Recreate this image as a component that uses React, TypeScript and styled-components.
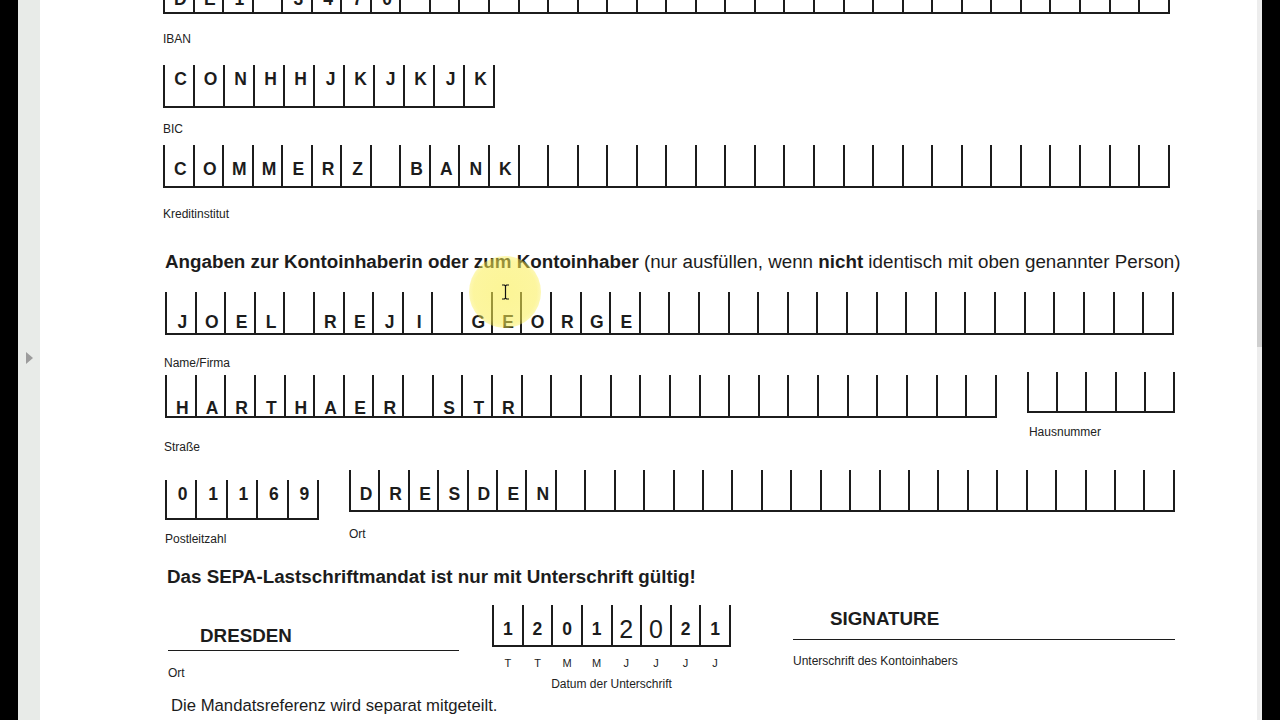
import React from "react";
import styled, { createGlobalStyle } from "styled-components";

const GlobalStyle = createGlobalStyle`
  html, body {
    margin: 0;
    padding: 0;
    background: #000;
  }
  body {
    font-family: "Liberation Sans", Arial, sans-serif;
  }
`;

const INK = "#1c1c1c";

const Screen = styled.div`
  display: flex;
  width: 1280px;
  height: 720px;
  overflow: hidden;
  background: #000;
`;

const BlackEdge = styled.div<{ $w: number }>`
  flex: 0 0 ${(p) => p.$w}px;
  background: #000;
`;

const Gutter = styled.div`
  flex: 0 0 22px;
  background: #e8ebe8;
  display: flex;
  align-items: center;
  justify-content: center;
`;

const Triangle = styled.div`
  width: 0;
  height: 0;
  margin-top: -4px;
  border-top: 6px solid transparent;
  border-bottom: 6px solid transparent;
  border-left: 7px solid #9c9c9c;
`;

const ScrollTrack = styled.div`
  flex: 0 0 5px;
  background: #ededed;
  padding-top: 210px;
  box-sizing: border-box;
`;

const ScrollThumb = styled.div`
  height: 137px;
  background: #cfcfcf;
`;

const Page = styled.div`
  position: relative;
  flex: 1;
  background: #fff;
  overflow: hidden;
  color: ${INK};
`;

const Form = styled.div`
  display: flex;
  flex-direction: column;
  align-items: flex-start;
  padding-left: 123px;
`;

const Field = styled.div<{ $mt?: number; $ml?: number; $center?: boolean }>`
  display: flex;
  flex-direction: column;
  align-items: ${(p) => (p.$center ? "center" : "flex-start")};
  margin-top: ${(p) => p.$mt ?? 0}px;
  margin-left: ${(p) => p.$ml ?? 0}px;
`;

const FieldRow = styled.div<{ $mt: number }>`
  display: flex;
  align-items: flex-start;
  margin-top: ${(p) => p.$mt}px;
`;

const BoxRow = styled.div<{ $h: number; $mt?: number; $ml?: number }>`
  display: flex;
  box-sizing: border-box;
  height: ${(p) => p.$h}px;
  margin-top: ${(p) => p.$mt ?? 0}px;
  margin-left: ${(p) => p.$ml ?? 0}px;
  border-right: 2px solid ${INK};
  border-bottom: 2px solid ${INK};
`;

const Cell = styled.div<{ $w: number; $pad: number; $mid?: boolean }>`
  display: flex;
  justify-content: center;
  align-items: ${(p) => (p.$mid ? "center" : "flex-start")};
  box-sizing: border-box;
  width: ${(p) => p.$w}px;
  padding-top: ${(p) => p.$pad}px;
  padding-left: ${(p) => (p.$mid ? 0 : 3)}px;
  border-left: 2px solid ${INK};
`;

const Char = styled.span<{ $big?: boolean }>`
  font-family: "Liberation Sans", Arial, sans-serif;
  font-size: ${(p) => (p.$big ? 25 : 17.5)}px;
  line-height: ${(p) => (p.$big ? 25 : 17)}px;
  font-weight: ${(p) => (p.$big ? 400 : 700)};
`;

const Label = styled.div<{ $mt: number; $ml?: number }>`
  margin-top: ${(p) => p.$mt}px;
  margin-left: ${(p) => p.$ml ?? 0}px;
  font-size: 12px;
  line-height: 14px;
  color: #222;
  white-space: nowrap;
`;

const Heading = styled.div<{ $mt: number; $ml: number }>`
  margin-top: ${(p) => p.$mt}px;
  margin-left: ${(p) => p.$ml}px;
  font-size: 18.8px;
  line-height: 22px;
  font-weight: 700;
  white-space: nowrap;
`;

const Plain = styled.span`
  font-weight: 400;
`;

const Strong = styled.span`
  font-weight: 700;
`;

const Written = styled.div<{ $mt: number; $ml: number }>`
  margin-top: ${(p) => p.$mt}px;
  margin-left: ${(p) => p.$ml}px;
  font-size: 18.8px;
  line-height: 22px;
  font-weight: 700;
`;

const SignLine = styled.div<{ $w: number; $mt: number }>`
  width: ${(p) => p.$w}px;
  margin-top: ${(p) => p.$mt}px;
  border-top: 1.5px solid ${INK};
`;

const DateLetters = styled.div`
  display: flex;
  margin-top: 10px;
`;

const DateLetter = styled.span`
  width: 29.6px;
  text-align: center;
  font-size: 11px;
  line-height: 12px;
  color: #222;
`;

const Note = styled.div`
  margin-top: 5px;
  margin-left: 8px;
  font-size: 16.7px;
  line-height: 20px;
`;

const Highlight = styled.div`
  position: absolute;
  left: 429px;
  top: 256px;
  width: 72px;
  height: 72px;
  border-radius: 50%;
  background: radial-gradient(
    circle,
    rgba(250, 238, 80, 0.6) 0%,
    rgba(250, 238, 80, 0.55) 62%,
    rgba(250, 238, 80, 0) 100%
  );
  pointer-events: none;
`;

const Cursor = styled.svg`
  position: absolute;
  left: 461px;
  top: 284px;
`;

type BoxesProps = {
  count: number;
  width: number;
  height: number;
  text?: string;
  pad?: number;
  mt?: number;
  ml?: number;
  mid?: boolean;
  big?: number[];
};

const CharBoxes = ({ count, width, height, text = "", pad = 0, mt, ml, mid, big = [] }: BoxesProps) => {
  const w = width / count;
  return (
    <BoxRow $h={height} $mt={mt} $ml={ml}>
      {Array.from({ length: count }, (_, i) => (
        <Cell key={i} $w={w} $pad={pad} $mid={mid}>
          <Char $big={big.includes(i)}>{(text[i] ?? "").trim()}</Char>
        </Cell>
      ))}
    </BoxRow>
  );
};

export default function App() {
  return (
    <>
      <GlobalStyle />
      <Screen>
        <BlackEdge $w={18} />
        <Gutter>
          <Triangle />
        </Gutter>
        <Page>
          <Form>
            <Field $mt={-28}>
              <CharBoxes count={34} width={1005} height={42} text="DE1 3470" pad={19} />
              <Label $mt={18}>IBAN</Label>
            </Field>

            <Field $mt={19}>
              <CharBoxes count={11} width={330} height={43} text="CONHHJKJKJK" pad={6} />
              <Label $mt={14}>BIC</Label>
            </Field>

            <Field $mt={9}>
              <CharBoxes count={34} width={1005} height={43} text="COMMERZ BANK" pad={16} />
              <Label $mt={19}>Kreditinstitut</Label>
            </Field>

            <Heading $mt={30} $ml={2}>
              Angaben zur Kontoinhaberin oder zum Kontoinhaber{" "}
              <Plain>
                (nur ausfüllen, wenn <Strong>nicht</Strong> identisch mit oben genannter Person)
              </Plain>
            </Heading>

            <Field $mt={19} $ml={2}>
              <CharBoxes count={34} width={1007} height={43} text="JOEL REJI GEORGE" pad={22} />
              <Label $mt={21} $ml={-1}>Name/Firma</Label>
            </Field>

            <FieldRow $mt={2}>
              <Field $mt={3} $ml={2}>
                <CharBoxes count={28} width={830} height={43} text="HARTHAER STR" pad={25} />
                <Label $mt={22} $ml={-1}>Straße</Label>
              </Field>
              <Field $ml={30}>
                <CharBoxes count={5} width={146} height={41} />
                <Label $mt={12} $ml={2}>Hausnummer</Label>
              </Field>
            </FieldRow>

            <FieldRow $mt={16}>
              <Field $mt={10} $ml={2}>
                <CharBoxes count={5} width={152} height={40} text="01169" pad={6} />
                <Label $mt={12}>Postleitzahl</Label>
              </Field>
              <Field $ml={30}>
                <CharBoxes count={28} width={824} height={42} text="DRESDEN" pad={16} />
                <Label $mt={15}>Ort</Label>
              </Field>
            </FieldRow>

            <Heading $mt={20} $ml={4}>
              Das SEPA-Lastschriftmandat ist nur mit Unterschrift gültig!
            </Heading>

            <FieldRow $mt={0}>
              <Field $ml={5}>
                <Written $mt={37} $ml={32}>DRESDEN</Written>
                <SignLine $w={291} $mt={3} />
                <Label $mt={15}>Ort</Label>
              </Field>
              <Field $ml={33} $mt={17} $center>
                <CharBoxes count={8} width={237} height={42} text="12012021" pad={8} mid big={[4, 5]} />
                <DateLetters>
                  {"TTMMJJJJ".split("").map((c, i) => (
                    <DateLetter key={i}>{c}</DateLetter>
                  ))}
                </DateLetters>
                <Label $mt={8}>Datum der Unterschrift</Label>
              </Field>
              <Field $ml={62}>
                <Written $mt={20} $ml={37}>SIGNATURE</Written>
                <SignLine $w={382} $mt={9} />
                <Label $mt={14}>Unterschrift des Kontoinhabers</Label>
              </Field>
            </FieldRow>

            <Note>Die Mandatsreferenz wird separat mitgeteilt.</Note>
          </Form>

          <Highlight />
          <Cursor width="9" height="16" viewBox="0 0 9 16">
            <path
              d="M1 1h2.5l1 1 1-1H8M4.5 2v12M1 15h2.5l1-1 1 1H8"
              fill="none"
              stroke="#111"
              strokeWidth="1.2"
            />
          </Cursor>
        </Page>
        <ScrollTrack>
          <ScrollThumb />
        </ScrollTrack>
        <BlackEdge $w={18} />
      </Screen>
    </>
  );
}
